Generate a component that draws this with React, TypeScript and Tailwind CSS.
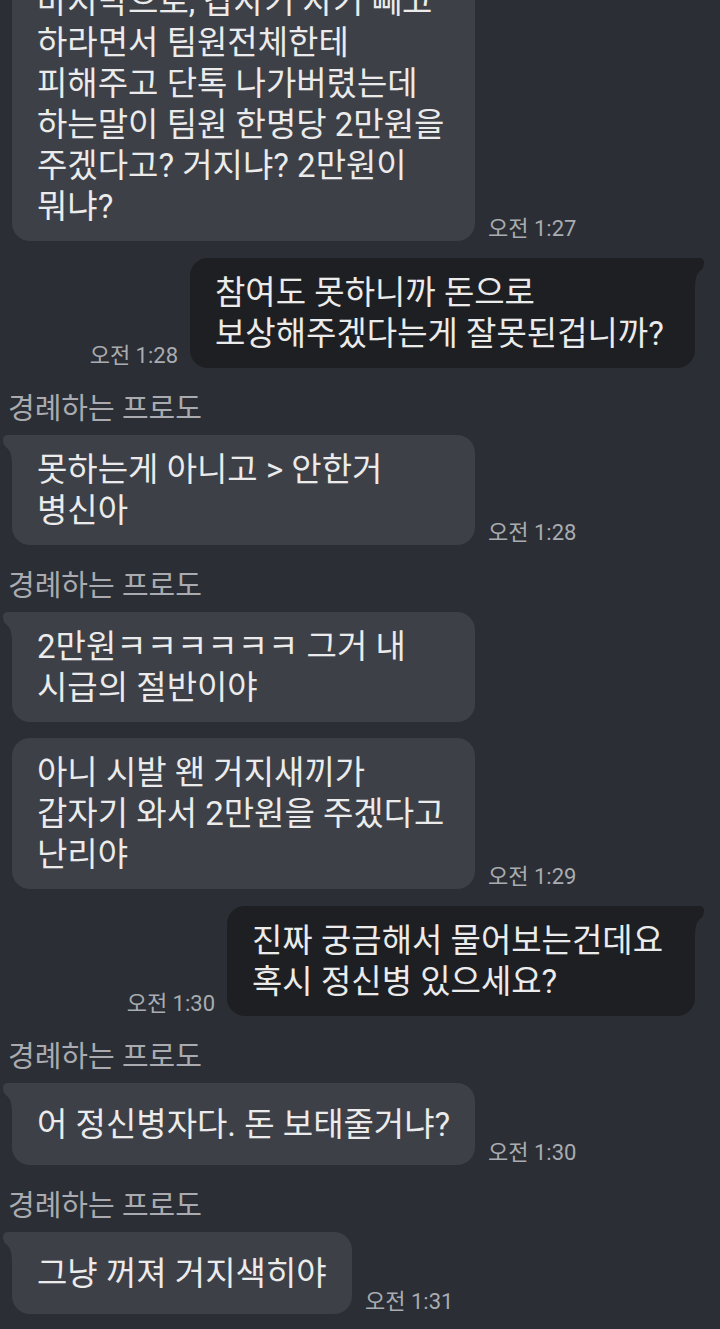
import React from 'react';

const font = { fontFamily: 'Roboto, "Noto Sans CJK KR", sans-serif' };

function TailLeft({ color }: { color: string }) {
  return (
    <svg className="absolute -left-[9px] top-0" width="12" height="30" viewBox="0 0 12 30">
      <path d="M12 0 H5 Q0 0 0 5 Q0 10 4 13 Q9 17 9 30 H12 Z" fill={color} />
    </svg>
  );
}

function TailRight({ color }: { color: string }) {
  return (
    <svg className="absolute -right-[9px] top-0" width="12" height="30" viewBox="0 0 12 30">
      <path d="M0 0 H7 Q12 0 12 5 Q12 10 8 13 Q3 17 3 30 H0 Z" fill={color} />
    </svg>
  );
}

function Time({ t }: { t: string }) {
  return <span className="shrink-0 whitespace-nowrap text-[22px] leading-[24px] text-[#a9acb1]">{t}</span>;
}

function Name() {
  return <div className="mt-[26px] pl-[8px] text-[29px] leading-[30px] text-[#a9abb0]">경례하는 프로도</div>;
}

function Received({ lines, time, tail, width, className = '' }: { lines: string[]; time?: string; tail?: boolean; width: string; className?: string }) {
  return (
    <div className={`flex items-end gap-[13px] pl-[12px] ${className}`}>
      <div className={`relative flex min-h-[82px] flex-col justify-center rounded-[18px] bg-[#3d4047] py-[14px] pl-[25px] text-[33px] leading-[41px] text-[#ebebeb] ${tail ? 'rounded-tl-[3px]' : ''} ${width}`}>
        {tail && <TailLeft color="#3d4047" />}
        {lines.map((l, i) => (
          <div key={i} className="whitespace-nowrap">{l}</div>
        ))}
      </div>
      {time && <Time t={time} />}
    </div>
  );
}

function Sent({ lines, time, width, className = '' }: { lines: string[]; time: string; width: string; className?: string }) {
  return (
    <div className={`flex items-end justify-end gap-[12px] pr-[25px] ${className}`}>
      <Time t={time} />
      <div className={`relative flex min-h-[82px] flex-col justify-center rounded-[18px] rounded-tr-[3px] bg-[#1e1f23] py-[14px] pl-[25px] text-[33px] leading-[41px] text-[#ebebeb] ${width}`}>
        <TailRight color="#1e1f23" />
        {lines.map((l, i) => (
          <div key={i} className="whitespace-nowrap">{l}</div>
        ))}
      </div>
    </div>
  );
}

export default function App() {
  return (
    <div className="h-[1329px] w-[720px] overflow-hidden bg-[#2b2e34]" style={font}>
      <div className="flex flex-col">
        <Received
          className="-mt-[33px]"
          width="w-[463px]"
          time="오전 1:27"
          lines={[
            '마지막으로, 갑자기 자기 빼고',
            '하라면서 팀원전체한테',
            '피해주고 단톡 나가버렸는데',
            '하는말이 팀원 한명당 2만원을',
            '주겠다고? 거지냐? 2만원이',
            '뭐냐?',
          ]}
        />
        <Sent
          className="mt-[17px]"
          width="w-[505px]"
          time="오전 1:28"
          lines={['참여도 못하니까 돈으로', '보상해주겠다는게 잘못된겁니까?']}
        />

        <Name />
        <Received className="mt-[11px]" tail width="w-[463px]" time="오전 1:28" lines={['못하는게 아니고 > 안한거', '병신아']} />

        <Name />
        <Received className="mt-[11px]" tail width="w-[463px]" lines={['2만원ㅋㅋㅋㅋㅋㅋ 그거 내', '시급의 절반이야']} />
        <Received
          className="mt-[16px]"
          width="w-[463px]"
          time="오전 1:29"
          lines={['아니 시발 왠 거지새끼가', '갑자기 와서 2만원을 주겠다고', '난리야']}
        />
        <Sent
          className="mt-[17px]"
          width="w-[468px]"
          time="오전 1:30"
          lines={['진짜 궁금해서 물어보는건데요', '혹시 정신병 있으세요?']}
        />

        <Name />
        <Received className="mt-[11px]" tail width="w-[463px]" time="오전 1:30" lines={['어 정신병자다. 돈 보태줄거냐?']} />

        <Name />
        <Received className="mt-[11px]" tail width="w-[340px]" time="오전 1:31" lines={['그냥 꺼져 거지색히야']} />
      </div>
    </div>
  );
}
